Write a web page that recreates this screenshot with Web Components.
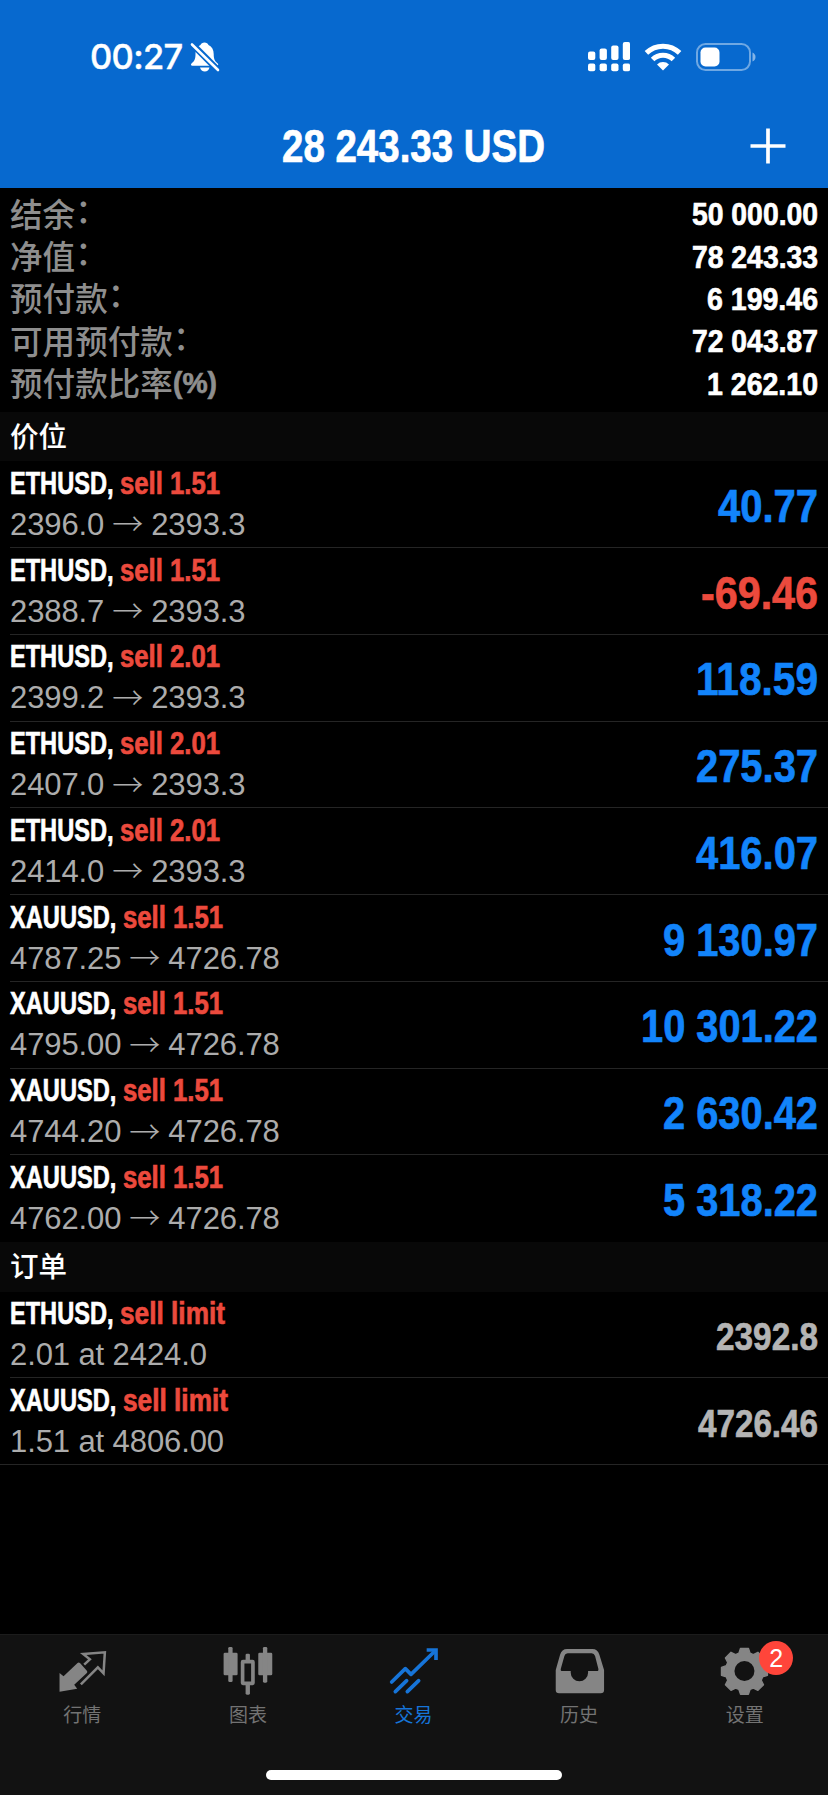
<!DOCTYPE html>
<html lang="zh-CN">
<head>
<meta charset="utf-8">
<meta name="viewport" content="width=device-width, initial-scale=1">
<title>交易</title>
<style>
  html, body { margin: 0; height: 100%; background: #000; }
  body { font-family: 'Liberation Sans', 'Noto Sans CJK SC', sans-serif; color: #fff; }
</style>
</head>
<body>
<trade-app></trade-app>

<script>
const GREY = '#8e8e8e';

const SUMMARY = [
  ['结余', ':', '50 000.00', 126],
  ['净值', ':', '78 243.33', 126],
  ['预付款', ':', '6 199.46', 111],
  ['可用预付款', ':', '72 043.87', 126],
  ['预付款比率', '(%)', '1 262.10', 111],
];

// symbol, action, open, current, profit, profit width
const POSITIONS = [
  ['ETHUSD', 'sell 1.51', '2396.0', '2393.3', '40.77', 100],
  ['ETHUSD', 'sell 1.51', '2388.7', '2393.3', '-69.46', 117],
  ['ETHUSD', 'sell 2.01', '2399.2', '2393.3', '118.59', 122],
  ['ETHUSD', 'sell 2.01', '2407.0', '2393.3', '275.37', 122],
  ['ETHUSD', 'sell 2.01', '2414.0', '2393.3', '416.07', 122],
  ['XAUUSD', 'sell 1.51', '4787.25', '4726.78', '9 130.97', 155],
  ['XAUUSD', 'sell 1.51', '4795.00', '4726.78', '10 301.22', 177],
  ['XAUUSD', 'sell 1.51', '4744.20', '4726.78', '2 630.42', 155],
  ['XAUUSD', 'sell 1.51', '4762.00', '4726.78', '5 318.22', 155],
];

const ORDERS = [
  ['ETHUSD', 'sell limit', '2.01 at 2424.0', '2392.8', 102],
  ['XAUUSD', 'sell limit', '1.51 at 4806.00', '4726.46', 120],
];

function gearPath(cx, cy, inner, outer) {
  const pts = [];
  for (let i = 0; i < 8; i++) {
    const a = i * Math.PI / 4;
    for (const [r, d] of [[inner, -0.3], [outer, -0.17], [outer, 0.17], [inner, 0.3]]) {
      pts.push(`${(cx + r * Math.sin(a + d)).toFixed(1)} ${(cy - r * Math.cos(a + d)).toFixed(1)}`);
    }
  }
  return `M${pts.join('L')}Z`;
}

const ICONS = {
  quotes: `<svg viewBox="176.4 81 144 144">
    <path d="M178 159l12 10 42-40q4-3 8 1l20 22q3 4 0 7l-38 35 9 12-53 9z" fill="currentColor"/>
    <path d="M252 134l17-16-20-16 65-5-4 63-17-18-51 51" fill="none" stroke="currentColor" stroke-width="7.500"/>
  </svg>`,
  charts: `<svg viewBox="673.2 81 144 144" fill="currentColor">
    <rect x="672" y="98" width="42" height="68" rx="4"/><rect x="686" y="81" width="13" height="105" rx="4"/>
    <rect x="776" y="98" width="42" height="68" rx="4"/><rect x="790" y="81" width="13" height="107" rx="4"/>
    <rect x="738" y="101" width="13" height="22" rx="4"/><rect x="738" y="190" width="13" height="34" rx="4"/>
    <rect x="729" y="125" width="31" height="65" rx="1" fill="none" stroke="currentColor" stroke-width="11"/>
  </svg>`,
  trade: `<svg viewBox="30 21 144 144" fill="none" stroke="currentColor" stroke-width="11" stroke-linecap="round" stroke-linejoin="round">
    <path d="M35 126l41-40 17 17 72-70"/><path d="M46 155l34-33M82 155l34-33"/>
    <path d="M140 30h28v30" stroke-linecap="butt" stroke-linejoin="miter"/>
  </svg>`,
  history: `<svg viewBox="424.8 81 144 144">
    <path fill="currentColor" fill-rule="evenodd" d="M424 150l13-46q5-17 21-17h76q16 0 21 17l14 46v60q0 10-10 10H434q-10 0-10-10zM441 153h28v5a26 26 0 0 0 52 0v-5h29q3-2 2-6l-10-39q-3-8-10-8h-72q-8 0-10 8l-11 39q-1 4 2 6z"/>
  </svg>`,
  settings: `<svg viewBox="921.6 81 144 144">
    <path fill="currentColor" stroke="currentColor" stroke-width="4" stroke-linejoin="round" d="${gearPath(992, 154, 57, 70)}"/>
    <circle cx="992" cy="153" r="30" fill="#121212"/>
  </svg>`,
};

class BaseElement extends HTMLElement {
  connectedCallback() {
    if (this.shadowRoot) return;
    this.attachShadow({ mode: 'open' }).innerHTML = this.render();
    this.ready?.();
  }
}

// Bold text squeezed horizontally to the width given in px
class CondensedText extends BaseElement {
  render() {
    return `<style>
      :host { display: inline-block; white-space: pre; font-weight: 700; }
      span { display: inline-block; transform-origin: 0 50%; -webkit-text-stroke: .7px currentColor; }
    </style><span><slot></slot></span>`;
  }
  ready() {
    const span = this.shadowRoot.querySelector('span');
    const width = Number(this.getAttribute('width'));
    const natural = span.getBoundingClientRect().width;
    this.style.width = `${width}px`;
    span.style.transform = `scaleX(${width / natural})`;
  }
}

class StatusBar extends BaseElement {
  render() {
    return `<style>
      :host { display: flex; align-items: center; justify-content: space-between; height: 112px; box-sizing: border-box; padding: 1px 72px 0 90px; }
      div { display: flex; align-items: center; }
      time { font: 500 34.500px/40px Inter, sans-serif; letter-spacing: -.7px; -webkit-text-stroke: .4px #fff; }
      svg { display: block; }
      .bell { margin-left: 8px; }
      .right { gap: 14px; }
    </style>
    <div>
      <time><slot></slot></time>
      <svg class="bell" width="30" height="32" viewBox="0 0 30 32" fill="#fff">
        <path d="M14.500 1.500c-2 0-3.500 1-4 2.500C7 5.500 5.500 9 5.500 13c0 5-1 7-4 9.500-1 1-.5 2.300.8 2.300h24.600c1.300 0 1.800-1.300.8-2.300-3-2.500-4-4.500-4-9.500 0-4-1.700-7.500-5.200-9-.5-1.500-2-2.500-4-2.500z"/>
        <path d="M10 26.500h9.500q-1 4-4.700 4t-4.800-4z"/>
        <path d="M.5 1.500l28 28" stroke="#0769cf" stroke-width="6.500"/>
        <path d="M2 3.500l26 25.500" stroke="#fff" stroke-width="2.600" stroke-linecap="round"/>
      </svg>
    </div>
    <div class="right">
      <svg width="42.5" height="30" viewBox="0 0 42.5 30" fill="#fff">
        <rect x="0" y="9.500" width="7.300" height="8.500" rx="2"/><rect x="11.600" y="6.500" width="7.300" height="11.500" rx="2"/>
        <rect x="23.200" y="3.500" width="7.300" height="14.500" rx="2"/><rect x="34.800" y="0" width="7.300" height="18" rx="2"/>
        <rect x="0" y="21.500" width="7.300" height="7.800" rx="2"/><rect x="11.600" y="21.500" width="7.300" height="7.800" rx="2"/>
        <rect x="23.200" y="21.500" width="7.300" height="7.800" rx="2"/><rect x="34.800" y="21.500" width="7.300" height="7.800" rx="2"/>
      </svg>
      <svg width="38" height="28" viewBox="0 0 38 28">
        <path d="M2.400 9.900a23.800 23.800 0 0 1 33.200 0M8.600 16.500a14.800 14.800 0 0 1 20.800 0" fill="none" stroke="#fff" stroke-width="5"/>
        <path d="M13 21.500a8.500 8.500 0 0 1 12 0l-6 6z" fill="#fff"/>
      </svg>
      <svg width="60" height="28" viewBox="0 0 60 28">
        <rect x="1" y="1" width="53" height="26" rx="8.500" fill="none" stroke="#fff" stroke-opacity=".42" stroke-width="2"/>
        <rect x="4.500" y="4.500" width="19" height="19" rx="5" fill="#fff"/>
        <path d="M56.500 9.500q3 1.500 3 4.500t-3 4.500z" fill="#fff" fill-opacity=".5"/>
      </svg>
    </div>`;
  }
}

class NavBar extends BaseElement {
  render() {
    return `<style>
      :host { display: grid; grid-template-columns: 1fr auto 1fr; align-items: center; height: 76px; padding: 0 42px 0 40px; box-sizing: border-box; font-size: 46px; line-height: 52px; }
      svg { grid-column: 3; justify-self: end; margin-bottom: 9px; }
      div { grid-column: 2; margin-top: -8px; }
    </style>
    <div><slot></slot></div>
    <svg width="36" height="36" viewBox="0 0 36 36" stroke="#fff" stroke-width="3.700"><path d="M18 .5v35M.5 18h35"/></svg>`;
  }
}

class SummaryRow extends BaseElement {
  render() {
    return `<style>
      :host { display: flex; justify-content: space-between; align-items: center; height: 42.4px; padding: 0 10px; }
      .label { display: flex; align-items: center; margin-top: -3px; font: 500 32.600px/42px 'Noto Sans CJK SC', sans-serif; color: ${GREY}; }
      .value { font-size: 32px; line-height: 42px; }
    </style>
    <div class="label"><slot></slot><slot name="suffix"></slot></div>
    <div class="value"><slot name="value"></slot></div>`;
  }
}

class SectionHeader extends BaseElement {
  render() {
    return `<style>
      :host { display: flex; align-items: center; height: 49.5px; box-sizing: border-box; padding: 0 10px 3px; background: #080808; font: 500 28.500px/40px 'Noto Sans CJK SC', sans-serif; }
    </style><slot></slot>`;
  }
}

class TradeRow extends BaseElement {
  render() {
    return `<style>
      :host { display: flex; box-sizing: border-box; height: 86.75px; padding-right: 10px; position: relative; justify-content: space-between; align-items: center; }
      :host::after { content: ''; position: absolute; left: 10px; right: 0; bottom: 0; height: 1px; background: #252525; }
      :host([last])::after { left: 0; }
      :host([plain])::after { display: none; }
      .info { padding-left: 10px; }
      .title { display: flex; font-size: 31px; line-height: 36px; }
      .detail { display: flex; align-items: center; font-size: 31px; line-height: 38px; color: #acacac; margin-top: 4px; white-space: pre; letter-spacing: -.1px; }
      .amount { font-size: 46px; line-height: 52px; margin-top: 2px; }
      :host([pending]) .amount { font-size: 39px; margin-top: 4px; }
    </style>
    <div class="info">
      <div class="title"><slot name="title"></slot></div>
      <div class="detail"><slot></slot></div>
    </div>
    <div class="amount"><slot name="amount"></slot></div>`;
  }
}

class ThinArrow extends BaseElement {
  render() {
    return `<style>
      :host { display: inline-block; width: 31px; margin: -5px 8px 0; font: 300 31px/38px 'Noto Sans CJK SC', sans-serif; }
    </style>→`;
  }
}

class TabItem extends BaseElement {
  render() {
    return `<style>
      :host { flex: 1; display: flex; flex-direction: column; align-items: center; color: #858585; }
      :host([active]) { color: #1674d8; }
      .icon { position: relative; width: 48px; height: 48px; }
      svg { display: block; width: 48px; height: 48px; overflow: visible; }
      .label { font: 400 19px/28px 'Noto Sans CJK SC', sans-serif; margin: 5px 1px 0 0; color: #737373; }
      :host([active]) .label { color: inherit; }
      .badge { position: absolute; left: 38px; top: -6px; width: 34px; height: 34px; border-radius: 50%; background: #ff453a; color: #fff; font: 25px/35px 'Liberation Sans', sans-serif; text-align: center; }
    </style>
    <div class="icon">${ICONS[this.getAttribute('icon')]}${this.hasAttribute('badge') ? `<div class="badge">${this.getAttribute('badge')}</div>` : ''}</div>
    <div class="label"><slot></slot></div>`;
  }
}

class TabBar extends BaseElement {
  render() {
    return `<style>
      :host { display: flex; flex-direction: column; align-items: center; box-sizing: border-box; height: 161px; padding-top: 12px; background: #121212; border-top: 1px solid #1c1c1c; }
      nav { display: flex; width: 100%; }
      .home { width: 296px; height: 10px; border-radius: 5px; background: #fff; margin: auto 0 15px; }
    </style>
    <nav><slot></slot></nav><div class="home"></div>`;
  }
}

class TradeApp extends BaseElement {
  title(symbol, action) {
    const sw = symbol === 'ETHUSD' ? 110 : 113;
    const aw = action === 'sell limit' ? 105 : 100;
    return `<condensed-text slot="title" width="${sw}">${symbol}, </condensed-text>
      <condensed-text slot="title" width="${aw}" class="red">${action}</condensed-text>`;
  }

  render() {
    const summary = SUMMARY.map(([label, suffix, value, w]) => `
      <summary-row>${label}${suffix === ':'
        ? '<span slot="suffix" class="colon">：</span>'
        : `<condensed-text slot="suffix" class="percent" width="44">${suffix}</condensed-text>`}
        <condensed-text slot="value" width="${w}">${value}</condensed-text>
      </summary-row>`).join('');

    const positions = POSITIONS.map(([symbol, action, open, current, profit, w], i) => `
      <trade-row ${i === POSITIONS.length - 1 ? 'plain' : ''}>
        ${this.title(symbol, action)}<span>${open}</span><thin-arrow></thin-arrow><span>${current}</span>
        <condensed-text slot="amount" width="${w}" class="${profit.startsWith('-') ? 'red' : 'blue'}">${profit}</condensed-text>
      </trade-row>`.replace(/>\s+</g, '><')).join('');

    const orders = ORDERS.map(([symbol, action, detail, price, w], i) => `
      <trade-row pending ${i === ORDERS.length - 1 ? 'last' : ''}>
        ${this.title(symbol, action)}<span>${detail}</span>
        <condensed-text slot="amount" width="${w}" class="grey">${price}</condensed-text>
      </trade-row>`.replace(/>\s+</g, '><')).join('');

    return `<style>
      :host { display: flex; flex-direction: column; width: 828px; height: 1795px; overflow: hidden; background: #000; }
      header { background: #0769cf; }
      .summary { padding: 5px 0 7px; }
      .red { color: #ec4a3d; }
      .blue { color: #1284fb; }
      .grey { color: #b4b4b4; }
      .percent { font: 700 30px 'Liberation Sans', sans-serif; margin-top: 2px; }
      .colon { position: relative; top: -4px; }
      tab-bar { margin-top: auto; }
    </style>
    <header>
      <status-bar>00:27</status-bar>
      <nav-bar><condensed-text width="263">28 243.33 USD</condensed-text></nav-bar>
    </header>
    <div class="summary">${summary}</div>
    <section-header>价位</section-header>
    ${positions}
    <section-header>订单</section-header>
    ${orders}
    <tab-bar>
      <tab-item icon="quotes">行情</tab-item>
      <tab-item icon="charts">图表</tab-item>
      <tab-item icon="trade" active>交易</tab-item>
      <tab-item icon="history">历史</tab-item>
      <tab-item icon="settings" badge="2">设置</tab-item>
    </tab-bar>`;
  }
}

customElements.define('status-bar', StatusBar);
customElements.define('nav-bar', NavBar);
customElements.define('summary-row', SummaryRow);
customElements.define('section-header', SectionHeader);
customElements.define('trade-row', TradeRow);
customElements.define('thin-arrow', ThinArrow);
customElements.define('tab-item', TabItem);
customElements.define('tab-bar', TabBar);
customElements.define('trade-app', TradeApp);
// Defined last: it measures itself, so everything around it must be laid out
customElements.define('condensed-text', CondensedText);
</script>
</body>
</html>
